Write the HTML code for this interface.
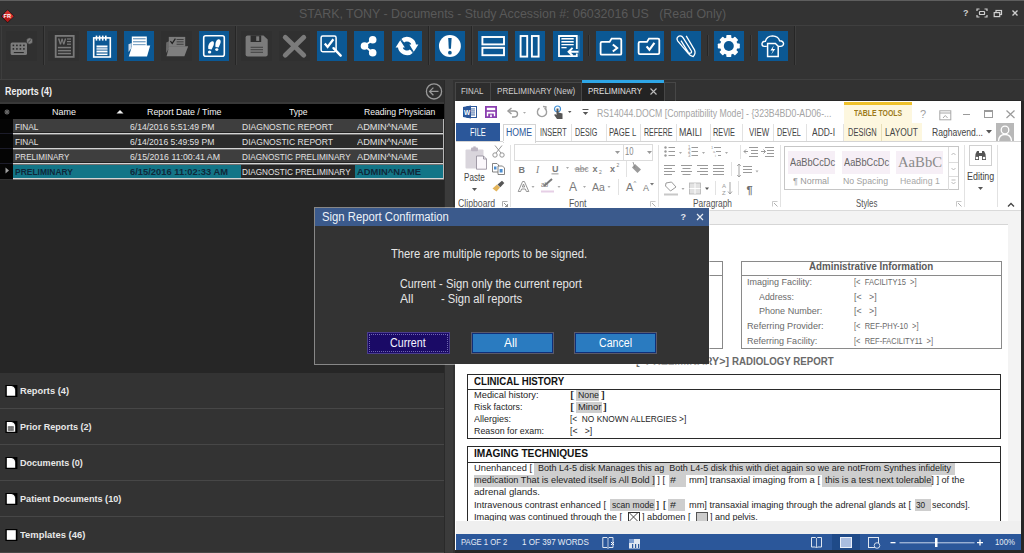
<!DOCTYPE html>
<html><head><meta charset="utf-8">
<style>
*{margin:0;padding:0;box-sizing:border-box}
html,body{width:1024px;height:553px;overflow:hidden;background:#333;font-family:"Liberation Sans",sans-serif;position:relative}
.a{position:absolute}
.t{position:absolute;white-space:nowrap;line-height:1}
.ib{position:absolute;top:31px;width:30px;height:30px;background:#0b5894}
.ig{position:absolute;top:31px;width:31px;height:30px;background:#303030}
.ib svg,.ig svg{position:absolute;left:0;top:0;width:30px;height:30px}
.sep{position:absolute;width:2px;border-left:1px solid #262626;border-right:1px solid #3e3e3e}
.hd{font-size:9px;color:#f2f2f2}
.rw{font-size:9px;color:#e2e2e2}
.sb{font-size:9.5px;font-weight:bold;color:#e8e8e8}
.rb{font-size:10px;color:#444}
.ad{font-size:9px;color:#6a6a6a}
.dc{font-size:9.5px;color:#1e1e1e}
.hl{position:absolute;background:#cecece}
svg{overflow:visible}
</style></head><body>
<!-- title bar -->
<div class="a" style="left:0;top:0;width:1024px;height:1px;background:#5e5e5e"></div>
<div class="t" style="left: 299px; font-size: 13px; color: rgb(89, 89, 89); top: 7px; transform-origin: 0px 0px; transform: scaleX(0.9537);">STARK, TONY - Documents - Study Accession #: 06032016 US &nbsp;&nbsp;(Read Only)</div>
<div class="a" style="left:0;top:25px;width:1024px;height:1px;background:#3f3f3f"></div>
<!-- window buttons -->
<svg class="a" style="left:960px;top:6px" width="64" height="14" viewBox="0 0 64 14">
<text x="3" y="10" font-family="Liberation Sans" font-weight="bold" font-size="9" fill="#d0d0d0">?</text>
<g fill="none" stroke="#cfcfcf" stroke-width="1.2">
<path d="M17 5 V3 H19.5 M24.5 3 H27 V5 M27 9 V11 H24.5 M19.5 11 H17 V9"></path>
<rect x="19.5" y="5.5" width="5" height="3" rx="0.6"></rect>
<rect x="36" y="4.5" width="5.5" height="4"></rect><rect x="34.2" y="6.6" width="5.5" height="4" fill="#333"></rect>
<path d="M52.5 4.5 L57.5 9.5 M57.5 4.5 L52.5 9.5" stroke-width="1.4"></path>
</g></svg>
<!-- toolbar -->
<div class="a" style="left:0;top:79px;width:1024px;height:1px;background:#404040"></div>
<svg class="a" style="left:0px;top:9px" width="16" height="15" viewBox="0 0 16 15">
<path d="M7.6 0.4 L14.4 7.2 L7.6 14 L0.8 7.2z" fill="#151515"></path>
<path d="M7.6 1.2 L13.6 7.2 L7.6 13.2 L1.6 7.2z" fill="#b81818"></path>
<path d="M7.6 1.2 L13.6 7.2 L10.6 10.2 L4.6 4.2z" fill="#d23030"></path>
<text x="3.6" y="9.4" font-family="Liberation Sans" font-weight="bold" font-size="5.5" fill="#fff">FR</text>
</svg>
<!-- toolbar icons -->
<div class="a" style="left:1px;top:26px;width:1px;height:53px;background:#3d3d3d"></div>
<div class="sep" style="left:43px;top:26px;height:39px"></div>
<div class="sep" style="left:235px;top:26px;height:39px"></div>
<div class="sep" style="left:428px;top:26px;height:39px"></div>
<div class="sep" style="left:471px;top:26px;height:39px"></div>
<div class="sep" style="left:588px;top:35px;height:21px"></div>
<div class="sep" style="left:707px;top:35px;height:21px"></div>
<div class="sep" style="left:750px;top:35px;height:21px"></div>
<div class="sep" style="left:794px;top:26px;height:39px"></div>
<!-- gray: keyboard -->
<div class="ig" style="left:6px"><svg viewBox="0 0 30 30">
<rect x="4.6" y="11.5" width="16.4" height="12.5" rx="1.5" fill="#7c7c7c"></rect>
<g fill="#2a2a2a"><rect x="6.6" y="13.6" width="1.6" height="1.6"></rect><rect x="10.1" y="13.6" width="1.6" height="1.6"></rect><rect x="13.6" y="13.6" width="1.6" height="1.6"></rect><rect x="17.1" y="13.6" width="1.6" height="1.6"></rect>
<rect x="6.6" y="17.1" width="1.6" height="1.6"></rect><rect x="10.1" y="17.1" width="1.6" height="1.6"></rect><rect x="13.6" y="17.1" width="1.6" height="1.6"></rect><rect x="17.1" y="17.1" width="1.6" height="1.6"></rect>
<rect x="7.8" y="21" width="10" height="1.1"></rect></g>
<circle cx="23.6" cy="10" r="3.2" fill="#7c7c7c" stroke="#2a2a2a" stroke-width="0.6"></circle>
<line x1="22.2" y1="11.3" x2="25" y2="8.6" stroke="#3a3a3a" stroke-width="0.9"></line>
</svg></div>
<!-- gray: word doc -->
<div class="ig" style="left:48px"><svg viewBox="0 0 30 30">
<rect x="7.7" y="4.9" width="18" height="21" fill="none" stroke="#7a7a7a" stroke-width="1.8"></rect>
<path d="M9.9 7.4 H11.5 L12.5 11.4 L13.5 7.4 H14.7 L15.7 11.4 L16.7 7.4 H18.2 L16.4 13.6 H15.1 L14.1 9.8 L13.1 13.6 H11.8z" fill="#7a7a7a"></path>
<g fill="#7a7a7a"><rect x="19" y="7.4" width="4" height="1.2"></rect><rect x="19" y="10" width="4" height="1.2"></rect><rect x="19" y="12.6" width="4" height="1.2"></rect>
<rect x="9.9" y="15.8" width="13.1" height="1.5"></rect><rect x="9.9" y="18.9" width="13.1" height="1.5"></rect><rect x="9.9" y="21.8" width="13.1" height="1.5"></rect></g>
</svg></div>
<!-- blue: notepad -->
<div class="ib" style="left:87px"><svg viewBox="0 0 30 30">
<rect x="6.7" y="6.9" width="16.6" height="19.1" fill="none" stroke="#fff" stroke-width="1.6"></rect>
<g fill="#fff"><rect x="8.7" y="4.6" width="1.6" height="5"></rect><rect x="11.8" y="4.6" width="1.6" height="5"></rect><rect x="14.9" y="4.6" width="1.6" height="5"></rect><rect x="18" y="4.6" width="1.6" height="5"></rect>
<rect x="9.5" y="14.5" width="11" height="1.5"></rect><rect x="9.5" y="17.2" width="11" height="1.5"></rect><rect x="9.5" y="19.9" width="11" height="1.5"></rect><rect x="9.5" y="22.6" width="11" height="1.5"></rect></g>
<g fill="#7fa6c6"><rect x="9.5" y="16" width="11" height="1.2"></rect><rect x="9.5" y="18.7" width="11" height="1.2"></rect><rect x="9.5" y="21.4" width="11" height="1.2"></rect></g>
</svg></div>
<!-- blue: folder open -->
<div class="ib" style="left:124px"><svg viewBox="0 0 30 30">
<path d="M7.6 12 L4.5 13.2 L4.5 21 L7.6 17z" fill="#cfdceb"></path>
<rect x="7.8" y="5.5" width="15" height="10" fill="#fff"></rect>
<g fill="#7fa6c6"><rect x="9" y="7" width="12.6" height="1.4"></rect><rect x="9" y="10" width="12.6" height="1.4"></rect><rect x="9" y="13" width="12.6" height="1.4"></rect></g>
<path d="M8.2 14.6 L26.2 14.6 L23 25.5 L4.8 25.5 Z" fill="#fff"></path>
</svg></div>
<!-- gray: folder check -->
<div class="ig" style="left:161px"><svg viewBox="0 0 30 30">
<path d="M8.5 10 L5.2 11.6 L5 22 L8.5 17z" fill="#6a6a6a"></path>
<rect x="7.8" y="5.9" width="16.4" height="9.6" fill="#7c7c7c"></rect>
<path d="M9.4 10.2 L11.2 12.4 L14.4 7.6" fill="none" stroke="#222" stroke-width="1.2"></path>
<g fill="#3a3a3a"><rect x="15.6" y="8" width="7" height="0.9"></rect><rect x="15.6" y="10.4" width="7" height="0.9"></rect><rect x="15.6" y="12.8" width="7" height="0.9"></rect></g>
<path d="M8.2 15.3 L27.2 15.3 L23.4 25.3 L5.6 25.3 Z" fill="#7f7f7f"></path>
</svg></div>
<!-- blue: footprints -->
<div class="ib" style="left:199px"><svg viewBox="0 0 30 30">
<rect x="4.7" y="4.8" width="20.6" height="20.4" rx="2" fill="none" stroke="#fff" stroke-width="1.6"></rect>
<path d="M12.5 10.5 C14.8 9.6 15.5 12 14.5 14.5 L12.6 18.6 L9.3 18 C8.7 15.3 9.7 11.8 12.5 10.5z" fill="#fff"></path>
<ellipse cx="10.6" cy="21.1" rx="1.7" ry="1.5" fill="#fff"></ellipse>
<path d="M19.3 8.2 C21.6 7.7 22.2 10.2 21.3 12.6 L19.6 16.4 L16.5 16 C16 13.4 16.6 9.2 19.3 8.2z" fill="#fff"></path>
<ellipse cx="17.8" cy="18.6" rx="1.6" ry="1.4" fill="#fff"></ellipse>
</svg></div>
<!-- gray: save -->
<div class="ig" style="left:241px"><svg viewBox="0 0 30 30">
<path d="M6.6 4.4 H22.5 L26.7 8.6 V23.6 Q26.7 25.6 24.7 25.6 H6.6 Q4.6 25.6 4.6 23.6 V6.4 Q4.6 4.4 6.6 4.4z" fill="#7b7b7b"></path>
<rect x="9.6" y="4.4" width="10.6" height="6.6" fill="#2d2d2d"></rect>
<rect x="15.2" y="5.3" width="3" height="4.6" fill="#7b7b7b"></rect>
<g fill="#3a3a3a"><rect x="9.6" y="15.8" width="12.4" height="0.9"></rect><rect x="9.6" y="18.3" width="12.4" height="0.9"></rect><rect x="9.6" y="20.8" width="12.4" height="0.9"></rect></g>
</svg></div>
<!-- gray: X -->
<div class="ig" style="left:279px"><svg viewBox="0 0 30 30">
<path d="M6.2 6.3 L24.8 24.2 M24.8 6.3 L6.2 24.2" stroke="#7b7b7b" stroke-width="4.8" stroke-linecap="round"></path>
</svg></div>
<!-- blue: magnify check -->
<div class="ib" style="left:317px"><svg viewBox="0 0 30 30">
<rect x="4.1" y="5.1" width="15" height="15.6" rx="1.6" fill="none" stroke="#fff" stroke-width="1.5"></rect>
<path d="M7.8 12.6 L10.6 16 L16.4 8.2" fill="none" stroke="#fff" stroke-width="2.3"></path>
<path d="M16.5 17.2 L23.7 24.7" stroke="#fff" stroke-width="2.4" stroke-linecap="round"></path>
</svg></div>
<!-- blue: share -->
<div class="ib" style="left:354px"><svg viewBox="0 0 30 30">
<path d="M10.5 15 L18.7 8.7 M10.5 15 L18.7 21.7" stroke="#fff" stroke-width="1.8"></path>
<circle cx="10.5" cy="15" r="3.8" fill="#fff"></circle><circle cx="18.7" cy="8.7" r="3.8" fill="#fff"></circle><circle cx="18.7" cy="21.7" r="3.8" fill="#fff"></circle>
</svg></div>
<!-- blue: refresh -->
<div class="ib" style="left:392px"><svg viewBox="0 0 30 30">
<path d="M10.2 10.2 A6.8 6.8 0 0 1 21.8 15" fill="none" stroke="#fff" stroke-width="4.6"></path>
<path d="M19.8 19.8 A6.8 6.8 0 0 1 8.2 15" fill="none" stroke="#fff" stroke-width="4.6"></path>
<path d="M17.4 13.6 L26.4 13.6 L21.8 20.8z" fill="#fff"></path>
<path d="M3.6 16.4 L12.8 16.4 L8.2 9.2z" fill="#fff"></path>
<path d="M8.6 7.6 L12.2 12.4 M18 17.8 L21.6 22.4" stroke="#0b5894" stroke-width="1"></path>
</svg></div>
<!-- blue: ! -->
<div class="ib" style="left:435px"><svg viewBox="0 0 30 30">
<circle cx="14.9" cy="15" r="10.95" fill="#fff"></circle>
<path d="M13.2 7 H16.6 L16 17.8 H13.8z" fill="#0b5894"></path>
<circle cx="14.9" cy="21.7" r="1.85" fill="#0b5894"></circle>
</svg></div>
<!-- blue: h split -->
<div class="ib" style="left:477.5px"><svg viewBox="0 0 30 30">
<rect x="4.4" y="6" width="21.6" height="7.4" fill="none" stroke="#fff" stroke-width="1.9"></rect>
<rect x="4.4" y="16.8" width="21.6" height="7.4" fill="none" stroke="#fff" stroke-width="1.9"></rect>
</svg></div>
<!-- blue: v split -->
<div class="ib" style="left:515px"><svg viewBox="0 0 30 30">
<rect x="5.6" y="5" width="6.6" height="20.6" fill="none" stroke="#fff" stroke-width="1.9"></rect>
<rect x="16.9" y="5" width="6.7" height="20.6" fill="none" stroke="#fff" stroke-width="1.9"></rect>
</svg></div>
<!-- blue: doc arrow -->
<div class="ib" style="left:552.5px"><svg viewBox="0 0 30 30">
<path d="M23.8 22.5 V25.2 H6 V5 H23.8 V18" fill="none" stroke="#fff" stroke-width="1.8"></path>
<line x1="26" y1="4.5" x2="26" y2="25.5" stroke="#7fa6c6" stroke-width="0.5"></line>
<g fill="#fff"><rect x="8.4" y="7" width="12.3" height="1.3"></rect><rect x="8.4" y="10" width="12.3" height="1.3"></rect><rect x="8.4" y="13" width="12.3" height="1.3"></rect><rect x="8.4" y="16" width="5.2" height="1.3"></rect></g>
<g fill="#a9c3da"><rect x="8.4" y="8.3" width="12.3" height="0.7"></rect><rect x="8.4" y="11.3" width="12.3" height="0.7"></rect></g>
<path d="M25.5 20.8 H15.6 M19.6 16.9 L15.6 20.8 L19.6 24.7" fill="none" stroke="#fff" stroke-width="2"></path>
</svg></div>
<!-- blue: folder arrow -->
<div class="ib" style="left:596px"><svg viewBox="0 0 30 30">
<path d="M4.6 12.2 Q4.6 10.9 5.9 10.9 H13.6 L15.6 7.6 H24 Q25.3 7.6 25.3 8.9 V22.4 Q25.3 23.7 24 23.7 H5.9 Q4.6 23.7 4.6 22.4z" fill="none" stroke="#fff" stroke-width="1.8"></path>
<path d="M16.8 13.4 L21.2 17 L16.8 20.6" fill="none" stroke="#fff" stroke-width="2"></path>
</svg></div>
<!-- blue: folder check -->
<div class="ib" style="left:633.5px"><svg viewBox="0 0 30 30">
<path d="M4.6 12.2 Q4.6 10.9 5.9 10.9 H13 L15 7.6 H24 Q25.3 7.6 25.3 8.9 V21.8 Q25.3 23.1 24 23.1 H5.9 Q4.6 23.1 4.6 21.8z" fill="none" stroke="#fff" stroke-width="1.8"></path>
<path d="M12.6 15.4 L15.4 18.8 L20.4 11.8" fill="none" stroke="#fff" stroke-width="2.2"></path>
</svg></div>
<!-- blue: paperclip -->
<div class="ib" style="left:671px"><svg viewBox="0 0 30 30">
<path d="M15.2 4.8 L23.6 19.2 Q25 22.4 22.2 25.6 Q18.6 24.6 17 22.2 L6.6 9.8 Q5 6.8 7.8 5.2 Q10.6 4.2 12.2 6.8 L20.4 20 Q21 21.8 19.4 22.2 Q18.1 22.5 17.3 21.3 L10 9.6" fill="none" stroke="#fff" stroke-width="1.3" stroke-linejoin="round"></path>
</svg></div>
<!-- blue: gear -->
<div class="ib" style="left:714.4px"><svg viewBox="0 0 30 30">
<g transform="translate(14.8 15)" fill="#fff">
<circle r="8.8"></circle>
<rect x="-2.5" y="-11" width="5" height="22" rx="0.8"></rect>
<rect x="-2.5" y="-11" width="5" height="22" rx="0.8" transform="rotate(45)"></rect>
<rect x="-2.5" y="-11" width="5" height="22" rx="0.8" transform="rotate(90)"></rect>
<rect x="-2.5" y="-11" width="5" height="22" rx="0.8" transform="rotate(135)"></rect>
<circle r="5" fill="#0b5894"></circle>
</g>
</svg></div>
<!-- blue: cloud -->
<div class="ib" style="left:758px"><svg viewBox="0 0 30 30">
<path d="M8.8 15.4 H6.2 Q3.8 15.2 4 12.6 Q4.4 10 7.4 10.2 Q8.8 5 14.6 4.9 Q20.4 5.2 21.6 9.8 Q25.4 10 25.6 12.8 Q25.4 15.2 22.5 15.4 H20.2" fill="none" stroke="#fff" stroke-width="1.4"></path>
<path d="M9.6 12.5 H17.4 L20.2 15.2 V25.6 H9.6z" fill="none" stroke="#fff" stroke-width="1.5"></path>
<path d="M15.8 14.4 L12.4 19.4 H15 L13.2 23.4 L17.2 18 H14.7z" fill="#fff"></path>
</svg></div>
<!-- left panel -->
<div class="a" style="left:0;top:80px;width:445px;height:22px;background:#2e2e2e"></div>
<div class="a" style="left:0;top:102px;width:445px;height:2px;background:#383838"></div>
<div class="t sb" style="left: 5px; font-size: 10px; color: rgb(240, 240, 240); top: 86.53px; transform-origin: 0px 0px; transform: scaleX(0.8902);">Reports (4)</div>
<svg class="a" style="left:425px;top:83px" width="18" height="18" viewBox="0 0 18 18">
<circle cx="9" cy="8.4" r="7.6" fill="none" stroke="#9a9a9a" stroke-width="1.3"></circle>
<path d="M13.5 8.4 H4.6 M8.4 4.6 L4.6 8.4 L8.4 12.2" fill="none" stroke="#9a9a9a" stroke-width="1.3"></path>
</svg>
<div class="a" style="left:0;top:104px;width:445px;height:15px;background:#000"></div>
<svg class="a" style="left:3.5px;top:108.5px" width="6" height="6" viewBox="0 0 6 6"><g stroke="#6a6a6a" stroke-width="1.1"><path d="M3 0.3 V5.7 M0.3 3 H5.7 M1.1 1.1 L4.9 4.9 M4.9 1.1 L1.1 4.9"></path></g></svg>
<div class="t hd" style="left: 52px; top: 107.98px; transform-origin: 0px 0px; transform: scaleX(0.9993);">Name</div>
<svg class="a" style="left:116px;top:109px" width="8" height="5" viewBox="0 0 8 5"><path d="M0.5 4.5 L4 1 L7.5 4.5z" fill="#f0f0f0"></path></svg>
<div class="t hd" style="left: 146.8px; top: 107.98px; transform-origin: 0px 0px; transform: scaleX(0.9863);">Report Date / Time</div>
<div class="t hd" style="left: 289px; top: 107.98px; transform-origin: 0px 0px; transform: scaleX(0.9531);">Type</div>
<div class="t hd" style="left: 364.2px; top: 107.98px; transform-origin: 0px 0px; transform: scaleX(0.9578);">Reading Physician</div>
<!-- rows -->
<div class="a" style="left:0;top:119px;width:13px;height:60px;background:#050505"></div>
<div class="a" style="left:0;top:133px;width:13px;height:1px;background:#1c1c2a"></div>
<div class="a" style="left:0;top:148px;width:13px;height:1px;background:#1c1c2a"></div>
<div class="a" style="left:0;top:163px;width:13px;height:1px;background:#1c1c2a"></div>
<svg class="a" style="left:5px;top:167px" width="5" height="7" viewBox="0 0 5 7"><path d="M0.5 0.5 L4 3.5 L0.5 6.5z" fill="#a0a0a0"></path></svg>
<div class="a" style="left:13px;top:119px;width:432px;height:13px;background:#3e3e3e"></div>
<div class="a" style="left:13px;top:132px;width:432px;height:1px;background:#222"></div>
<div class="a" style="left:13px;top:133px;width:432px;height:1px;background:#d4d4d4"></div><div class="a" style="left:13px;top:134px;width:432px;height:1px;background:#707070"></div>
<div class="a" style="left:13px;top:135px;width:432px;height:13px;background:#2b2b2b"></div>
<div class="a" style="left:13px;top:148px;width:432px;height:1px;background:#d4d4d4"></div><div class="a" style="left:13px;top:149px;width:432px;height:1px;background:#707070"></div>
<div class="a" style="left:13px;top:150px;width:432px;height:12px;background:#3e3e3e"></div>
<div class="a" style="left:13px;top:162px;width:432px;height:1px;background:#222"></div>
<div class="a" style="left:13px;top:163px;width:432px;height:1px;background:#d4d4d4"></div><div class="a" style="left:13px;top:164px;width:432px;height:1px;background:#707070"></div>
<div class="a" style="left:13px;top:165px;width:432px;height:13px;background:#137587"></div>
<div class="a" style="left:241px;top:165px;width:114px;height:13px;background:#262626"></div>
<div class="a" style="left:13px;top:178px;width:432px;height:1px;background:#d4d4d4"></div><div class="a" style="left:13px;top:179px;width:432px;height:1px;background:#707070"></div>
<div class="a" style="left:443px;top:119px;width:2px;height:60px;background:#b8b8b8"></div>

<div class="t rw" style="left: 15.4px; top: 122.58px; transform-origin: 0px 0px; transform: scaleX(0.9171);">FINAL</div>
<div class="t rw" style="left: 129.7px; top: 122.58px; transform-origin: 0px 0px; transform: scaleX(0.9528);">6/14/2016 5:51:49 PM</div>
<div class="t rw" style="left: 242.4px; top: 122.58px; transform-origin: 0px 0px; transform: scaleX(0.9493);">DIAGNOSTIC REPORT</div>
<div class="t rw" style="left: 357px; top: 122.58px; transform-origin: 0px 0px; transform: scaleX(1.0231);">ADMIN^NAME</div>

<div class="t rw" style="left: 15.4px; top: 137.58px; transform-origin: 0px 0px; transform: scaleX(0.9171);">FINAL</div>
<div class="t rw" style="left: 129.7px; top: 137.58px; transform-origin: 0px 0px; transform: scaleX(0.9528);">6/14/2016 5:49:59 PM</div>
<div class="t rw" style="left: 242.4px; top: 137.58px; transform-origin: 0px 0px; transform: scaleX(0.9493);">DIAGNOSTIC REPORT</div>
<div class="t rw" style="left: 357px; top: 137.58px; transform-origin: 0px 0px; transform: scaleX(1.0231);">ADMIN^NAME</div>

<div class="t rw" style="left: 15.4px; top: 152.58px; transform-origin: 0px 0px; transform: scaleX(0.8939);">PRELIMINARY</div>
<div class="t rw" style="left: 129.7px; top: 152.58px; transform-origin: 0px 0px; transform: scaleX(0.9738);">6/15/2016 11:00:41 AM</div>
<div class="t rw" style="left: 242.4px; top: 152.58px; transform-origin: 0px 0px; transform: scaleX(0.9099);">DIAGNOSTIC PRELIMINARY</div>
<div class="t rw" style="left: 357px; top: 152.58px; transform-origin: 0px 0px; transform: scaleX(1.0231);">ADMIN^NAME</div>

<div class="t rw" style="left: 15.2px; font-weight: bold; color: rgb(16, 40, 58); top: 167.58px; transform-origin: 0px 0px; transform: scaleX(0.9405);">PRELIMINARY</div>
<div class="t rw" style="left: 129.7px; font-weight: bold; color: rgb(16, 40, 58); top: 167.58px; transform-origin: 0px 0px; transform: scaleX(1.04);">6/15/2016 11:02:33 AM</div>
<div class="t rw" style="left: 242.4px; top: 167.58px; transform-origin: 0px 0px; transform: scaleX(0.9099);">DIAGNOSTIC PRELIMINARY</div>
<div class="t rw" style="left: 357px; font-weight: bold; color: rgb(16, 40, 58); top: 167.58px; transform-origin: 0px 0px; transform: scaleX(1.0446);">ADMIN^NAME</div>

<div class="a" style="left:0;top:180px;width:445px;height:193px;background:#262626"></div>

<!-- sidebar -->
<div class="a" style="left:0;top:373px;width:445px;height:180px;background:#333"></div>
<div class="a" style="left:0;top:408px;width:445px;height:1px;background:#474747"></div>
<div class="a" style="left:0;top:444px;width:445px;height:1px;background:#474747"></div>
<div class="a" style="left:0;top:480px;width:445px;height:1px;background:#474747"></div>
<div class="a" style="left:0;top:516px;width:445px;height:1px;background:#474747"></div>
<div class="a" style="left:0;top:552px;width:445px;height:1px;background:#474747"></div>
<svg class="a" style="left:5px;top:384.9px" width="13" height="12" viewBox="0 0 13 12"><rect x="0.4" y="0" width="12" height="12" fill="#000"></rect><path d="M1.8 1 H6.6 L10.2 4.6 V10.8 H1.8z" fill="#fff"></path><path d="M7.4 0.8 L10.4 3.8 H7.4z" fill="#fff"></path></svg>
<div class="t sb" style="left: 20.2px; top: 386.26px; transform-origin: 0px 0px; transform: scaleX(0.9769);">Reports (4)</div>
<svg class="a" style="left:5px;top:420.9px" width="13" height="12" viewBox="0 0 13 12"><rect x="0.4" y="0" width="12" height="12" fill="#000"></rect><path d="M1.8 1 H6.6 L10.2 4.6 V10.8 H1.8z" fill="#fff"></path><path d="M7.4 0.8 L10.4 3.8 H7.4z" fill="#fff"></path><rect x="2.8" y="5" width="6" height="5" fill="#8a8a8a"></rect><path d="M2.8 6.6 H8.8 M2.8 8.3 H8.8 M4.8 5 V10 M6.8 5 V10" stroke="#666" stroke-width="0.5"></path></svg>
<div class="t sb" style="left: 20.2px; top: 422.26px; transform-origin: 0px 0px; transform: scaleX(0.9551);">Prior Reports (2)</div>
<svg class="a" style="left:5px;top:456.9px" width="13" height="12" viewBox="0 0 13 12"><rect x="0.4" y="0" width="12" height="12" fill="#000"></rect><path d="M1.8 1 H6.6 L10.2 4.6 V10.8 H1.8z" fill="#fff"></path><path d="M7.4 0.8 L10.4 3.8 H7.4z" fill="#fff"></path></svg>
<div class="t sb" style="left: 20.2px; top: 458.26px; transform-origin: 0px 0px; transform: scaleX(0.9517);">Documents (0)</div>
<svg class="a" style="left:5px;top:492.9px" width="13" height="12" viewBox="0 0 13 12"><rect x="0.4" y="0" width="12" height="12" fill="#000"></rect><path d="M1.8 1 H6.6 L10.2 4.6 V10.8 H1.8z" fill="#fff"></path><path d="M7.4 0.8 L10.4 3.8 H7.4z" fill="#fff"></path></svg>
<div class="t sb" style="left: 20.2px; top: 494.26px; transform-origin: 0px 0px; transform: scaleX(0.9595);">Patient Documents (10)</div>
<svg class="a" style="left:5px;top:528.9px" width="13" height="12" viewBox="0 0 13 12"><rect x="0.4" y="0" width="12" height="12" fill="#000"></rect><rect x="1.8" y="1.2" width="9" height="9.6" fill="#fff"></rect></svg>
<div class="t sb" style="left: 20.2px; top: 530.26px; transform-origin: 0px 0px; transform: scaleX(0.992);">Templates (46)</div>
<!-- right panel -->
<div class="a" style="left:445px;top:80px;width:579px;height:473px;background:#323232"></div>
<div class="a" style="left:455px;top:100px;width:566px;height:1px;background:#282828"></div>
<div class="a" style="left:445px;top:80px;width:7.5px;height:473px;background:#3b3b3b"></div>
<div class="a" style="left:444px;top:80px;width:1px;height:473px;background:#2a2a2a"></div>
<!-- tabs -->
<div class="a" style="left:455px;top:82px;width:36px;height:19px;background:#2d2d2d;border:1px solid #474747;border-bottom:none"></div>
<div class="t" style="left: 461px; font-size: 9px; color: rgb(208, 208, 208); top: 86.88px; transform-origin: 0px 0px; transform: scaleX(0.8779);">FINAL</div>
<div class="a" style="left:490px;top:82px;width:92px;height:19px;background:#2d2d2d;border:1px solid #474747;border-bottom:none"></div>
<div class="t" style="left: 497px; font-size: 9px; color: rgb(208, 208, 208); top: 86.88px; transform-origin: 0px 0px; transform: scaleX(0.8969);">PRELIMINARY (New)</div>
<div class="a" style="left:582px;top:80px;width:82px;height:21px;background:#232323"></div>
<div class="a" style="left:582px;top:80px;width:82px;height:3px;background:#2ea6e6"></div>
<div class="t" style="left: 587.8px; font-size: 9px; color: rgb(224, 224, 224); top: 86.88px; transform-origin: 0px 0px; transform: scaleX(0.8873);">PRELIMINARY</div>
<svg class="a" style="left:650px;top:88px" width="7" height="7" viewBox="0 0 7 7"><path d="M0.5 0.5 L6.5 6.5 M6.5 0.5 L0.5 6.5" stroke="#bdbdbd" stroke-width="1.1"></path></svg>
<div class="a" style="left:664px;top:82px;width:12px;height:19px;border:1px solid #474747;border-bottom:none"></div>
<!-- word frame -->
<div class="a" style="left:455px;top:101px;width:566px;height:449px;background:#fff"></div>
<div class="a" style="left:1021px;top:101px;width:3px;height:452px;background:#262626"></div>
<div class="a" style="left:455px;top:550px;width:569px;height:3px;background:#262626"></div>
<!-- QAT -->
<svg class="a" style="left:462px;top:105px" width="16" height="14" viewBox="0 0 16 14">
<rect x="5" y="1.5" width="9.5" height="11" fill="#fff" stroke="#2b579a" stroke-width="1"></rect>
<g fill="#2b579a"><rect x="9" y="3.5" width="4" height="0.9"></rect><rect x="9" y="5.5" width="4" height="0.9"></rect><rect x="9" y="7.5" width="4" height="0.9"></rect><rect x="9" y="9.5" width="4" height="0.9"></rect></g>
<path d="M1 2 L9 0.5 V13.5 L1 12z" fill="#2b579a"></path>
<text x="2" y="9.6" font-family="Liberation Sans" font-weight="bold" font-size="6.5" fill="#fff">W</text>
</svg>
<svg class="a" style="left:485px;top:106px" width="12" height="12" viewBox="0 0 12 12">
<path d="M0.9 0.9 H11.1 V11.1 H0.9z" fill="none" stroke="#8a3fb0" stroke-width="1.8"></path>
<rect x="1" y="4.2" width="10" height="1.6" fill="#8a3fb0"></rect>
<rect x="3.2" y="7.6" width="5.6" height="3.5" fill="#8a3fb0"></rect><rect x="5.2" y="8.6" width="1.6" height="2.5" fill="#fff"></rect>
</svg>
<svg class="a" style="left:506px;top:107px" width="22" height="11" viewBox="0 0 22 11">
<path d="M3 4 H8 Q11.5 4 11.5 7 Q11.5 10 8 10 H6" fill="none" stroke="#9a9a9a" stroke-width="1.4"></path>
<path d="M5.5 1 L2 4 L5.5 7" fill="none" stroke="#9a9a9a" stroke-width="1.4"></path>
<path d="M17 5 L20 5 L18.5 6.8z" fill="#aaa"></path>
</svg>
<svg class="a" style="left:536px;top:106px" width="12" height="12" viewBox="0 0 12 12">
<path d="M8.5 2.2 A4.6 4.6 0 1 1 3.5 2.2" fill="none" stroke="#a0a0a0" stroke-width="1.4"></path>
<path d="M7 0.5 L10 0.8 L9.6 4" fill="none" stroke="#a0a0a0" stroke-width="1.3"></path>
</svg>
<svg class="a" style="left:552px;top:105px" width="22" height="15" viewBox="0 0 22 15">
<circle cx="5.5" cy="4" r="3" fill="none" stroke="#3f8fd6" stroke-width="1.2"></circle>
<path d="M4.5 3.5 V10 L3 9 L2.2 10 L5 14 H10.5 V8.5 L6.5 7.5 V3.5z" fill="#555"></path>
<path d="M16 6 L19.5 6 L17.75 8z" fill="#555"></path>
</svg>
<svg class="a" style="left:582px;top:108px" width="7" height="8" viewBox="0 0 7 8"><rect x="0.5" y="1" width="6" height="1" fill="#555"></rect><path d="M0.8 4 H6.2 L3.5 7z" fill="#555"></path></svg>
<div class="t" style="left: 596.7px; font-size: 10.5px; color: rgb(164, 164, 164); top: 107.51px; transform-origin: 0px 0px; transform: scaleX(0.8295);">RS14044.DOCM [Compatibility Mode] - {323B4BD0-AD06-...</div>
<!-- table tools -->
<div class="a" style="left:844px;top:102px;width:78px;height:39px;background:#fdf7df"></div>
<div class="a" style="left:844px;top:102px;width:68px;height:3px;background:#efc12a"></div>
<div class="a" style="left:912px;top:102px;width:10px;height:21px;background:#fff"></div>
<div class="t" style="left: 853.5px; font-size: 9.5px; font-weight: bold; color: rgb(156, 122, 26); top: 107.76px; transform-origin: 0px 0px; transform: scaleX(0.7286);">TABLE TOOLS</div>
<!-- window controls -->
<div class="t" style="left: 920px; font-size: 11px; color: rgb(160, 160, 160); top: 108.69px;">?</div>
<svg class="a" style="left:939px;top:110px" width="13" height="11" viewBox="0 0 13 11"><rect x="0.8" y="0.8" width="11" height="9" fill="none" stroke="#a8a8a8" stroke-width="1"></rect><path d="M0.8 3 H11.8" stroke="#a8a8a8"></path><path d="M4 8 L6.3 5.5 L8.6 8" fill="none" stroke="#a8a8a8"></path></svg>
<div class="a" style="left:962.6px;top:113.5px;width:7.4px;height:1.3px;background:#9a9a9a"></div>
<div class="a" style="left:984px;top:110px;width:9px;height:8px;border:1px solid #9a9a9a;border-top-width:2px"></div>
<svg class="a" style="left:1005.5px;top:110px" width="9" height="8.5" viewBox="0 0 9 8.5"><path d="M0.5 0.5 L8.5 8 M8.5 0.5 L0.5 8" stroke="#9a9a9a" stroke-width="1.2"></path></svg>
<!-- tabs -->
<div class="a" style="left:456px;top:123px;width:44px;height:18px;background:#2b579a"></div>
<div class="t" style="left: 470px; font-size: 10px; color: rgb(255, 255, 255); top: 127.73px; transform-origin: 0px 0px; transform: scaleX(0.7479);">FILE</div>
<div class="a" style="left:503px;top:123.5px;width:33px;height:19px;background:#fff;border:1px solid #d4d4d4;border-bottom:none"></div>
<div class="t rb" style="left: 506.3px; color: rgb(43, 87, 154); top: 127.73px; transform-origin: 0px 0px; transform: scaleX(0.8667);">HOME</div>
<div class="t rb" style="left: 539.8px; top: 127.73px; transform-origin: 0px 0px; transform: scaleX(0.7288);">INSERT</div>
<div class="t rb" style="left: 574.8px; top: 127.73px; transform-origin: 0px 0px; transform: scaleX(0.7133);">DESIG</div>
<div class="t rb" style="left: 609px; top: 127.73px; transform-origin: 0px 0px; transform: scaleX(0.7714);">PAGE L</div>
<div class="t rb" style="left: 643.8px; top: 127.73px; transform-origin: 0px 0px; transform: scaleX(0.7026);">REFERE</div>
<div class="t rb" style="left: 679.4px; top: 127.73px; transform-origin: 0px 0px; transform: scaleX(0.8804);">MAILI</div>
<div class="t rb" style="left: 713.4px; top: 127.73px; transform-origin: 0px 0px; transform: scaleX(0.733);">REVIE</div>
<div class="t rb" style="left: 748.7px; top: 127.73px; transform-origin: 0px 0px; transform: scaleX(0.7863);">VIEW</div>
<div class="t rb" style="left: 776.5px; top: 127.73px; transform-origin: 0px 0px; transform: scaleX(0.7257);">DEVEL</div>
<div class="t rb" style="left: 811.8px; top: 127.73px; transform-origin: 0px 0px; transform: scaleX(0.8445);">ADD-I</div>
<div class="t rb" style="left: 847.7px; top: 127.73px; transform-origin: 0px 0px; transform: scaleX(0.7485);">DESIGN</div>
<div class="t rb" style="left: 885px; top: 127.73px; transform-origin: 0px 0px; transform: scaleX(0.8401);">LAYOUT</div>
<div class="a" style="left:571px;top:124px;width:1px;height:17px;background:#e2e2e2"></div>
<div class="a" style="left:605.5px;top:124px;width:1px;height:17px;background:#e2e2e2"></div>
<div class="a" style="left:640px;top:124px;width:1px;height:17px;background:#e2e2e2"></div>
<div class="a" style="left:675.5px;top:124px;width:1px;height:17px;background:#e2e2e2"></div>
<div class="a" style="left:709.5px;top:124px;width:1px;height:17px;background:#e2e2e2"></div>
<div class="a" style="left:742px;top:124px;width:1px;height:17px;background:#e2e2e2"></div>
<div class="a" style="left:773px;top:124px;width:1px;height:17px;background:#e2e2e2"></div>
<div class="a" style="left:806px;top:124px;width:1px;height:17px;background:#e2e2e2"></div>
<div class="a" style="left:881px;top:124px;width:1px;height:17px;background:#e8dfb8"></div>
<div class="a" style="left:842.5px;top:124px;width:1px;height:17px;background:#e2e2e2"></div>
<div class="t" style="left: 931.8px; font-size: 10.5px; color: rgb(68, 68, 68); top: 126.61px; transform-origin: 0px 0px; transform: scaleX(0.8164);">Raghavend...</div>
<svg class="a" style="left:986px;top:130px" width="6" height="4" viewBox="0 0 6 4"><path d="M0 0 H6 L3 3.5z" fill="#555"></path></svg>
<svg class="a" style="left:996px;top:123px" width="18" height="18" viewBox="0 0 18 18"><rect width="18" height="18" fill="#b8b8b8"></rect><circle cx="9" cy="7" r="3.8" fill="none" stroke="#fff" stroke-width="1.3"></circle><path d="M2.5 18 Q3 11.5 9 11.5 Q15 11.5 15.5 18" fill="none" stroke="#fff" stroke-width="1.3"></path></svg>
<!-- ribbon body -->
<div class="a" style="left:456px;top:141px;width:565px;height:1px;background:#d4d4d4"></div>
<div class="a" style="left:503px;top:141px;width:32px;height:1px;background:#fff"></div>
<div class="a" style="left:456px;top:210px;width:565px;height:1px;background:#dadada"></div>
<div class="a" style="left:456px;top:211px;width:565px;height:13px;background:#f3f3f3"></div>
<div class="a" style="left:456px;top:224px;width:552px;height:1px;background:#d6d6d6"></div>
<!-- clipboard group -->
<svg class="a" style="left:464px;top:146px" width="24" height="24" viewBox="0 0 24 24">
<rect x="1.5" y="3.5" width="18" height="19" rx="1" fill="#d9d5dc"></rect>
<rect x="7" y="1.6" width="7" height="3.6" rx="1" fill="#bdb6c2"></rect><rect x="9.3" y="0.4" width="2.4" height="2" fill="#bdb6c2"></rect>
<path d="M12.5 10 H19.5 L22.5 13 V23.2 H12.5z" fill="#fbf8fc" stroke="#8e8896" stroke-width="0.8"></path>
<path d="M19.5 10 V13 H22.5" fill="none" stroke="#8e8896" stroke-width="0.8"></path>
</svg>
<div class="t" style="left: 464.2px; font-size: 11px; color: rgb(68, 68, 68); top: 171.69px; transform-origin: 0px 0px; transform: scaleX(0.7356);">Paste</div>
<svg class="a" style="left:472px;top:188px" width="5" height="3" viewBox="0 0 5 3"><path d="M0 0 H5 L2.5 3z" fill="#555"></path></svg>
<svg class="a" style="left:492px;top:145px" width="13" height="13" viewBox="0 0 13 13">
<path d="M3 0.5 L9 8 M10 0.5 L4 8" stroke="#8a8a8a" stroke-width="0.9"></path>
<circle cx="3" cy="10" r="2.2" fill="none" stroke="#8a8a8a" stroke-width="0.9"></circle><circle cx="10" cy="10" r="2.2" fill="none" stroke="#8a8a8a" stroke-width="0.9"></circle>
</svg>
<svg class="a" style="left:492px;top:163px" width="13" height="12" viewBox="0 0 13 12">
<path d="M0.5 0.5 H5 L6.5 2 V9 H0.5z" fill="#fff" stroke="#666" stroke-width="0.8"></path>
<path d="M6 3 H10.5 L12.5 5 V11.5 H6z" fill="#fff" stroke="#666" stroke-width="0.8"></path>
<rect x="2" y="3.5" width="2.5" height="3" fill="#4c8ed0"></rect><rect x="7.6" y="6" width="3" height="3.5" fill="#4c8ed0"></rect>
</svg>
<svg class="a" style="left:492px;top:180px" width="13" height="12" viewBox="0 0 13 12">
<path d="M0.5 8.5 L5 4.5 L8 7.5 L4.5 11.5z" fill="#e3b45a"></path>
<path d="M5.5 4.5 L10 0.8 L12.3 3 L8.3 7.3z" fill="#555"></path>
</svg>
<div class="t" style="left: 458.3px; font-size: 11px; color: rgb(85, 85, 85); top: 198.09px; transform-origin: 0px 0px; transform: scaleX(0.7899);">Clipboard</div>
<svg class="a" style="left:502px;top:201px" width="6" height="6" viewBox="0 0 6 6"><path d="M0.5 5.5 V0.5 H5.5" fill="none" stroke="#999" stroke-width="0.8"></path><path d="M2 2 L5.5 5.5 M5.5 3 V5.5 H3" fill="none" stroke="#777" stroke-width="0.8"></path></svg>
<div class="a" style="left:510px;top:145px;width:1px;height:62px;background:#e2e2e2"></div>
<!-- font group -->
<div class="a" style="left:514.4px;top:144.2px;width:139px;height:16.5px;border:1px solid #dcdcdc"></div>
<div class="a" style="left:622.5px;top:145px;width:1px;height:15px;background:#dcdcdc"></div>
<svg class="a" style="left:615px;top:151px" width="5" height="3" viewBox="0 0 5 3"><path d="M0 0 H5 L2.5 3z" fill="#999"></path></svg>
<svg class="a" style="left:646.5px;top:151px" width="5" height="3" viewBox="0 0 5 3"><path d="M0 0 H5 L2.5 3z" fill="#999"></path></svg>
<div class="t" style="left: 625px; font-size: 10px; color: rgb(136, 136, 136); top: 147.03px; transform-origin: 0px 0px; transform: scaleX(0.764);">10</div>
<svg class="a" style="left:515px;top:161px" width="140" height="34" viewBox="0 0 140 34">
<g font-family="Liberation Sans" fill="#7a7a7a">
<text x="3.5" y="11.5" font-size="9" font-weight="bold">B</text>
<text x="21" y="11.5" font-size="9.5" font-style="italic" font-family="Liberation Serif">I</text>
<text x="37" y="11" font-size="9" font-weight="bold">U</text>
<text x="60" y="11" font-size="8.5" fill="#909090">abc</text>
<text x="77.5" y="11" font-size="9" font-weight="bold">x</text><text x="84" y="13" font-size="5">2</text>
<text x="95" y="11" font-size="9" font-weight="bold">x</text><text x="101.5" y="6" font-size="5">2</text>
</g><path d="M3.2 30.5 L7.6 20.5 H9.4 L13.8 30.5 H11.4 L10.4 28 H6.6 L5.6 30.5z M7.3 26 H9.7 L8.5 23z" fill="#fff" stroke="#8a8a8a" stroke-width="0.9" stroke-linejoin="round"></path><g font-family="Liberation Sans" fill="#7a7a7a">
<text x="26" y="26" font-size="6.5">ab</text>
<text x="54" y="30" font-size="12">A</text>
<text x="77" y="30" font-size="10.5">Aa</text>
<text x="111" y="30" font-size="11">A</text><text x="118.5" y="24" font-size="6">^</text>
<text x="128" y="30" font-size="9">A</text>
</g>
<rect x="36.5" y="12.5" width="7" height="0.8" fill="#7a7a7a"></rect>
<rect x="59.5" y="7.6" width="13" height="0.8" fill="#7a7a7a"></rect>
<path d="M51 6 L54 6 L52.5 8z" fill="#aaa"></path>
<path d="M29 25 L37 18" stroke="#7a7a7a" stroke-width="2"></path>
<rect x="26" y="29.5" width="13" height="2" fill="#e6cfe6"></rect>
<path d="M16.5 25 L19.5 25 L18 27z M42.5 25 L45.5 25 L44 27z M68 25 L71 25 L69.5 27z M92.5 25 L95.5 25 L94 27z" fill="#aaa"></path>
<path d="M135 22 L139 22 L137 24.5z" fill="#777"></path>
<path d="M120 3 L126 8.5 L122.5 12 L117 6.5z" fill="#9a9a9a"></path>
<path d="M118 1 L120 7" stroke="#888" stroke-width="0.8"></path>
</svg>
<div class="a" style="left:625.5px;top:161px;width:1px;height:16px;background:#e2e2e2"></div>
<div class="a" style="left:618px;top:179px;width:1px;height:16px;background:#e2e2e2"></div>
<div class="t" style="left: 569.3px; font-size: 11px; color: rgb(85, 85, 85); top: 198.09px; transform-origin: 0px 0px; transform: scaleX(0.7949);">Font</div>
<svg class="a" style="left:650px;top:201px" width="6" height="6" viewBox="0 0 6 6"><path d="M0.5 5.5 V0.5 H5.5" fill="none" stroke="#bbb" stroke-width="0.8"></path><path d="M2 2 L5.5 5.5" stroke="#999" stroke-width="0.8"></path></svg>
<div class="a" style="left:657.8px;top:145px;width:1px;height:62px;background:#e2e2e2"></div>
<!-- paragraph group -->
<svg class="a" style="left:662px;top:144px" width="118" height="54" viewBox="0 0 118 54">
<g fill="#9a9a9a">
<circle cx="3.5" cy="3.5" r="1.2"></circle><circle cx="3.5" cy="7.5" r="1.2"></circle><circle cx="3.5" cy="11.5" r="1.2"></circle>
<rect x="6.5" y="3" width="6.5" height="1"></rect><rect x="6.5" y="7" width="6.5" height="1"></rect><rect x="6.5" y="11" width="6.5" height="1"></rect>
<path d="M17 8 L20 8 L18.5 10z" fill="#aaa"></path>
<text x="26" y="5" font-size="4.5" font-family="Liberation Sans">1</text><text x="26" y="9" font-size="4.5" font-family="Liberation Sans">2</text><text x="26" y="13" font-size="4.5" font-family="Liberation Sans">3</text>
<rect x="29.5" y="3" width="6.5" height="1"></rect><rect x="29.5" y="7" width="6.5" height="1"></rect><rect x="29.5" y="11" width="6.5" height="1"></rect>
<path d="M40 8 L43 8 L41.5 10z" fill="#aaa"></path>
<text x="49" y="5" font-size="4" font-family="Liberation Sans">1</text><text x="51" y="9" font-size="4" font-family="Liberation Sans">a</text><text x="53" y="13" font-size="4" font-family="Liberation Sans">i</text>
<rect x="52" y="3" width="7" height="1"></rect><rect x="54" y="7" width="5" height="1"></rect><rect x="56" y="11" width="3" height="1"></rect>
<path d="M63 8 L66 8 L64.5 10z" fill="#aaa"></path>
<rect x="87" y="3" width="9" height="1"></rect><rect x="89" y="6" width="7" height="1"></rect><rect x="89" y="9" width="7" height="1"></rect><rect x="87" y="12" width="9" height="1"></rect>
<path d="M86 7.5 L82 7.5 M84 5.5 L82 7.5 L84 9.5" stroke="#9a9a9a" stroke-width="1" fill="none"></path>
<rect x="103" y="3" width="9" height="1"></rect><rect x="105" y="6" width="7" height="1"></rect><rect x="105" y="9" width="7" height="1"></rect><rect x="103" y="12" width="9" height="1"></rect>
<path d="M99 7.5 L103.5 7.5 M101.5 5.5 L103.5 7.5 L101.5 9.5" stroke="#9a9a9a" stroke-width="1" fill="none"></path>
<rect x="2" y="21" width="11" height="1"></rect><rect x="2" y="24" width="8" height="1"></rect><rect x="2" y="27" width="11" height="1"></rect><rect x="2" y="30" width="8" height="1"></rect>
<rect x="19" y="21" width="11" height="1"></rect><rect x="20.5" y="24" width="8" height="1"></rect><rect x="19" y="27" width="11" height="1"></rect><rect x="20.5" y="30" width="8" height="1"></rect>
<rect x="35" y="21" width="11" height="1"></rect><rect x="38" y="24" width="8" height="1"></rect><rect x="35" y="27" width="11" height="1"></rect><rect x="38" y="30" width="8" height="1"></rect>
<rect x="51" y="21" width="11" height="1"></rect><rect x="51" y="24" width="11" height="1"></rect><rect x="51" y="27" width="11" height="1"></rect><rect x="51" y="30" width="11" height="1"></rect>
<rect x="81" y="22" width="9" height="1"></rect><rect x="81" y="25" width="9" height="1"></rect><rect x="81" y="28" width="9" height="1"></rect>
<path d="M77 20 V33 M75.2 22 L77 20 L78.8 22 M75.2 31 L77 33 L78.8 31" stroke="#9a9a9a" stroke-width="0.9" fill="none"></path>
<path d="M93.5 26.5 L96.5 26.5 L95 28.5z" fill="#aaa"></path>
<path d="M4 39 L9.5 38 L14 43 L8.5 47 L3.5 42z" fill="none" stroke="#9a9a9a" stroke-width="1"></path>
<rect x="2" y="49.5" width="14" height="2" fill="#c8c8c8"></rect>
<path d="M19.5 44 L22.5 44 L21 46z" fill="#aaa"></path>
<rect x="27.5" y="39" width="11" height="11" fill="#e2e2e2" stroke="#b4b4b4" stroke-width="0.8"></rect>
<path d="M33 39 V50 M27.5 44.5 H38.5" stroke="#fff" stroke-width="1"></path>
<path d="M43 43.5 L47 43.5 L45 46z" fill="#555"></path>
<text x="60" y="44" font-size="6" font-family="Liberation Sans">A</text><text x="60" y="51" font-size="6" font-family="Liberation Sans">Z</text>
<path d="M68 38 V50 M66 47.5 L68 50 L70 47.5" stroke="#9a9a9a" stroke-width="0.9" fill="none"></path>
<text x="84.5" y="50" font-size="11" font-weight="bold" font-family="Liberation Sans" fill="#707070">¶</text>
</g>
</svg>
<div class="a" style="left:740px;top:145px;width:1px;height:14px;background:#e2e2e2"></div>
<div class="a" style="left:731px;top:162px;width:1px;height:14px;background:#e2e2e2"></div>
<div class="a" style="left:715px;top:181px;width:1px;height:14px;background:#e2e2e2"></div>
<div class="a" style="left:738px;top:181px;width:1px;height:14px;background:#e2e2e2"></div>
<div class="t" style="left: 693px; font-size: 11px; color: rgb(85, 85, 85); top: 198.09px; transform-origin: 0px 0px; transform: scaleX(0.7591);">Paragraph</div>
<svg class="a" style="left:772px;top:201px" width="6" height="6" viewBox="0 0 6 6"><path d="M0.5 5.5 V0.5 H5.5" fill="none" stroke="#bbb" stroke-width="0.8"></path><path d="M2 2 L5.5 5.5" stroke="#999" stroke-width="0.8"></path></svg>
<div class="a" style="left:779.9px;top:145px;width:1px;height:62px;background:#e2e2e2"></div>
<!-- styles -->
<div class="a" style="left:784.4px;top:146.3px;width:174.4px;height:44.1px;border:1px solid #c6c6c6"></div>
<div class="a" style="left:788.3px;top:150.7px;width:47.2px;height:23.5px;background:#f6eff6"></div>
<div class="a" style="left:842px;top:150.7px;width:47.7px;height:23.5px;background:#f6eff6"></div>
<div class="a" style="left:895.7px;top:150.7px;width:47.8px;height:23.5px;background:#f6eff6"></div>
<div class="t" style="left: 789.5px; font-size: 11px; color: rgb(102, 102, 102); top: 157.09px; transform-origin: 0px 0px; transform: scaleX(0.8365);">AaBbCcDc</div>
<div class="t" style="left: 793px; font-size: 9.5px; color: rgb(154, 154, 154); top: 176.46px; transform-origin: 0px 0px; transform: scaleX(0.9385);">¶ Normal</div>
<div class="t" style="left: 843.5px; font-size: 11px; color: rgb(102, 102, 102); top: 157.09px; transform-origin: 0px 0px; transform: scaleX(0.8365);">AaBbCcDc</div>
<div class="t" style="left: 843px; font-size: 9.5px; color: rgb(160, 160, 160); top: 176.16px; transform-origin: 0px 0px; transform: scaleX(0.916);">No Spacing</div>
<div class="t" style="left: 897.5px; font-size: 15px; font-family: &quot;Liberation Serif&quot;, serif; color: rgb(138, 138, 138); top: 155.2px; transform-origin: 0px 0px; transform: scaleX(0.9778);">AaBbC</div>
<div class="t" style="left: 899.7px; font-size: 9.5px; color: rgb(168, 168, 168); top: 176.16px; transform-origin: 0px 0px; transform: scaleX(0.9189);">Heading 1</div>
<div class="a" style="left:947.5px;top:147px;width:1px;height:43px;background:#dcdcdc"></div>
<div class="a" style="left:948px;top:162px;width:10px;height:1px;background:#dcdcdc"></div>
<div class="a" style="left:948px;top:176px;width:10px;height:1px;background:#dcdcdc"></div>
<svg class="a" style="left:948px;top:147px" width="11" height="43" viewBox="0 0 11 43">
<path d="M3.5 8 L5.5 6 L7.5 8" fill="none" stroke="#aaa" stroke-width="0.8"></path>
<path d="M3.5 21 L5.5 23 L7.5 21" fill="none" stroke="#aaa" stroke-width="0.8"></path>
<path d="M3.5 33 H7.5 M3.5 35 L5.5 37 L7.5 35" fill="none" stroke="#aaa" stroke-width="0.8"></path>
</svg>
<div class="t" style="left: 855.5px; font-size: 11px; color: rgb(85, 85, 85); top: 198.09px; transform-origin: 0px 0px; transform: scaleX(0.7107);">Styles</div>
<svg class="a" style="left:956px;top:201px" width="6" height="6" viewBox="0 0 6 6"><path d="M0.5 5.5 V0.5 H5.5" fill="none" stroke="#bbb" stroke-width="0.8"></path><path d="M2 2 L5.5 5.5" stroke="#999" stroke-width="0.8"></path></svg>
<div class="a" style="left:964.4px;top:145px;width:1px;height:62px;background:#e2e2e2"></div>
<!-- editing -->
<div class="a" style="left:969px;top:145px;width:22.7px;height:21px;border:1px solid #d0d0d0"></div>
<svg class="a" style="left:974px;top:149px" width="13" height="12" viewBox="0 0 13 12">
<path d="M1 11 L1.5 5 L3 2 H5 V11z M12 11 L11.5 5 L10 2 H8 V11z" fill="#555"></path>
<rect x="5" y="4" width="3" height="3" fill="#555"></rect>
<circle cx="3" cy="9" r="1.3" fill="#fff"></circle><circle cx="10" cy="9" r="1.3" fill="#fff"></circle>
</svg>
<div class="t" style="left: 967px; font-size: 11px; color: rgb(68, 68, 68); top: 170.69px; transform-origin: 0px 0px; transform: scaleX(0.8115);">Editing</div>
<svg class="a" style="left:978px;top:187px" width="5" height="3" viewBox="0 0 5 3"><path d="M0 0 H5 L2.5 3z" fill="#555"></path></svg>
<div class="a" style="left:997.3px;top:145px;width:1px;height:62px;background:#e2e2e2"></div>
<svg class="a" style="left:1007px;top:202px" width="8" height="5" viewBox="0 0 8 5"><path d="M1 4.5 L4 1.5 L7 4.5" fill="none" stroke="#444" stroke-width="1.3"></path></svg>
<!-- document -->
<div class="a" style="left:1008px;top:211px;width:13px;height:310px;background:#f3f3f3"></div>
<div class="a" style="left:456px;top:521px;width:565px;height:13px;background:#efefef"></div>
<!-- boxes top -->
<div class="a" style="left:600px;top:260.5px;width:123px;height:88px;border:1px solid #888;border-width:1.5px"></div>
<div class="a" style="left:600px;top:275px;width:123px;height:1px;background:#888"></div>
<div class="a" style="left:740.5px;top:260.5px;width:261px;height:88px;border:1.5px solid #8a8a8a"></div>
<div class="a" style="left:740.5px;top:275px;width:261px;height:1.3px;background:#8a8a8a"></div>
<div class="t" style="left: 809.2px; font-size: 11px; font-weight: bold; color: rgb(90, 90, 90); top: 260.69px; transform-origin: 0px 0px; transform: scaleX(0.8881);">Administrative Information</div>
<div class="t ad" style="left: 746.8px; top: 278.28px; transform-origin: 0px 0px; transform: scaleX(0.998);">Imaging Facility:</div>
<div class="t ad" style="left: 854.4px; top: 278.28px; transform-origin: 0px 0px; transform: scaleX(0.8397);">[&lt; &nbsp;FACILITY15 &nbsp;&gt;]</div>
<div class="t ad" style="left: 758.5px; top: 293.18px; transform-origin: 0px 0px; transform: scaleX(0.9822);">Address:</div>
<div class="t ad" style="left: 854.4px; top: 293.18px; transform-origin: 0px 0px; transform: scaleX(0.9819);">[&lt; &nbsp; &gt;]</div>
<div class="t ad" style="left: 758.5px; top: 307.38px; transform-origin: 0px 0px; transform: scaleX(1.004);">Phone Number:</div>
<div class="t ad" style="left: 854.4px; top: 307.38px; transform-origin: 0px 0px; transform: scaleX(0.9819);">[&lt; &nbsp; &gt;]</div>
<div class="t ad" style="left: 746.8px; top: 322.28px; transform-origin: 0px 0px; transform: scaleX(1.0141);">Referring Provider:</div>
<div class="t ad" style="left: 854.4px; top: 322.28px; transform-origin: 0px 0px; transform: scaleX(0.8368);">[&lt; &nbsp;REF-PHY-10 &nbsp;&gt;]</div>
<div class="t ad" style="left: 746.8px; top: 336.88px; transform-origin: 0px 0px; transform: scaleX(1.0024);">Referring Facility:</div>
<div class="t ad" style="left: 854.4px; top: 336.88px; transform-origin: 0px 0px; transform: scaleX(0.8337);">[&lt; &nbsp;REF-FACILITY11 &nbsp;&gt;]</div>
<div class="t" style="left: 635.8px; font-size: 11px; font-weight: bold; color: rgb(106, 106, 106); top: 356.29px; transform-origin: 0px 0px; transform: scaleX(0.9733);">[&lt;PRELIMINARY&gt;]</div>
<div class="t" style="left: 732.3px; font-size: 11px; font-weight: bold; color: rgb(106, 106, 106); top: 356.29px; transform-origin: 0px 0px; transform: scaleX(0.882);">RADIOLOGY REPORT</div>
<!-- clinical history -->
<div class="a" style="left:467px;top:373.7px;width:534px;height:65px;border:1px solid #2a2a2a"></div>
<div class="a" style="left:467px;top:389px;width:534px;height:1px;background:#2a2a2a"></div>
<div class="t" style="left: 474px; font-size: 10.5px; font-weight: bold; color: rgb(17, 17, 17); top: 375.91px; transform-origin: 0px 0px; transform: scaleX(0.9212);">CLINICAL HISTORY</div>
<div class="hl" style="left:576px;top:390px;width:23px;height:11px"></div>
<div class="hl" style="left:576px;top:402px;width:26px;height:11px"></div>
<div class="t dc" style="left: 474px; top: 390.36px; transform-origin: 0px 0px; transform: scaleX(0.9773);">Medical history:</div>
<div class="t dc" style="left: 569.7px; top: 390.36px; transform-origin: 0px 0px; transform: scaleX(1.5148);">[</div>
<div class="t dc" style="left: 577.5px; top: 390.36px; transform-origin: 0px 0px; transform: scaleX(0.9243);">None</div>
<div class="t dc" style="left: 600.5px; top: 390.36px; transform-origin: 0px 0px; transform: scaleX(1.5148);">]</div>
<div class="t dc" style="left: 474px; top: 402.36px; transform-origin: 0px 0px; transform: scaleX(0.926);">Risk factors:</div>
<div class="t dc" style="left: 569.7px; top: 402.36px; transform-origin: 0px 0px; transform: scaleX(1.5148);">[</div>
<div class="t dc" style="left: 577.5px; top: 402.36px; transform-origin: 0px 0px; transform: scaleX(0.9846);">Minor</div>
<div class="t dc" style="left: 602.5px; top: 402.36px; transform-origin: 0px 0px; transform: scaleX(1.5148);">]</div>
<div class="t dc" style="left: 474px; top: 414.36px; transform-origin: 0px 0px; transform: scaleX(0.9468);">Allergies:</div>
<div class="t dc" style="left: 569.7px; top: 414.36px; transform-origin: 0px 0px; transform: scaleX(0.8776);">[&lt; &nbsp;NO KNOWN ALLERGIES &gt;]</div>
<div class="t dc" style="left: 474px; top: 425.96px; transform-origin: 0px 0px; transform: scaleX(0.9335);">Reason for exam:</div>
<div class="t dc" style="left: 569.7px; top: 425.96px; transform-origin: 0px 0px; transform: scaleX(0.9178);">[&lt; &nbsp; &gt;]</div>
<!-- imaging -->
<div class="a" style="left:467px;top:446px;width:534px;height:90px;border:1px solid #2a2a2a;border-bottom:none"></div>
<div class="a" style="left:467px;top:461.7px;width:534px;height:1px;background:#2a2a2a"></div>
<div class="t" style="left: 474px; font-size: 10.5px; font-weight: bold; color: rgb(17, 17, 17); top: 447.81px; transform-origin: 0px 0px; transform: scaleX(0.9674);">IMAGING TECHNIQUES</div>
<div class="hl" style="left:534.3px;top:462.5px;width:420.7px;height:12px"></div>
<div class="hl" style="left:474px;top:474.5px;width:180.8px;height:12px"></div>
<div class="hl" style="left:668.7px;top:474.5px;width:17.3px;height:12px"></div>
<div class="hl" style="left:821.8px;top:474.5px;width:110.2px;height:12px"></div>
<div class="hl" style="left:609.5px;top:499px;width:45.3px;height:12px"></div>
<div class="hl" style="left:668px;top:499px;width:17.4px;height:12px"></div>
<div class="hl" style="left:914.7px;top:499px;width:16.6px;height:12px"></div>
<div class="t dc" style="left: 474px; top: 463.16px; transform-origin: 0px 0px; transform: scaleX(0.9802);">Unenhanced [</div>
<div class="t dc" style="left: 537.5px; top: 463.16px; transform-origin: 0px 0px; transform: scaleX(0.948);">Both L4-5 disk Manages this ag &nbsp;Both L4-5 disk this with diet again so we are notFrom Synthes infidelity</div>
<div class="t dc" style="left: 474px; top: 475.06px; transform-origin: 0px 0px; transform: scaleX(0.968);">medication That is elevated itself is All Bold ] ] [</div>
<div class="t dc" style="left: 670.3px; top: 475.06px; transform-origin: 0px 0px; transform: scaleX(1.1327);">#</div>
<div class="t dc" style="left: 688.8px; top: 475.06px; transform-origin: 0px 0px; transform: scaleX(0.9886);">mm] transaxial imaging from a [</div>
<div class="t dc" style="left: 824.5px; top: 475.06px; transform-origin: 0px 0px; transform: scaleX(0.9676);">this is a test next tolerable] ] of the</div>
<div class="t dc" style="left: 474px; top: 486.76px; transform-origin: 0px 0px; transform: scaleX(1.0159);">adrenal glands.</div>
<div class="t dc" style="left: 474px; top: 499.56px; transform-origin: 0px 0px; transform: scaleX(0.9725);">Intravenous contrast enhanced [</div>
<div class="t dc" style="left: 611.5px; top: 499.56px; transform-origin: 0px 0px; transform: scaleX(0.9035);">scan mode</div>
<div class="t dc" style="left: 656px; top: 499.56px; transform-origin: 0px 0px; transform: scaleX(1.2623);">] [</div>
<div class="t dc" style="left: 670.3px; top: 499.56px; transform-origin: 0px 0px; transform: scaleX(1.1327);">#</div>
<div class="t dc" style="left: 688.5px; top: 499.56px; transform-origin: 0px 0px; transform: scaleX(0.9686);">mm] transaxial imaging through the adrenal glands at [</div>
<div class="t dc" style="left: 916px; top: 499.56px; transform-origin: 0px 0px; transform: scaleX(0.8697);">30</div>
<div class="t dc" style="left: 932.2px; top: 499.56px; transform-origin: 0px 0px; transform: scaleX(0.9343);">seconds].</div>
<div class="t dc" style="left: 474px; top: 512.16px; transform-origin: 0px 0px; transform: scaleX(0.9663);">Imaging was continued through the [</div>
<div class="hl" style="left:628px;top:512px;width:11.5px;height:10px;background:#fff;border:1px solid #333"></div>
<svg class="a" style="left:628px;top:512px" width="11" height="10" viewBox="0 0 11 11"><path d="M1 1 L10 10 M10 1 L1 10" stroke="#333" stroke-width="1"></path></svg>
<div class="t dc" style="left: 642px; top: 512.16px; transform-origin: 0px 0px; transform: scaleX(0.9667);">] abdomen [</div>
<div class="hl" style="left:696.3px;top:512px;width:11.3px;height:10px;background:#ccc;border:1px solid #555"></div>
<div class="t dc" style="left: 710.4px; top: 512.16px; transform-origin: 0px 0px; transform: scaleX(0.9427);">] and pelvis.</div>
<div class="a" style="left:456px;top:521px;width:552px;height:13px;background:#efefef"></div>
<div class="a" style="left:1008px;top:521px;width:13px;height:13px;background:#efefef"></div>
<!-- status bar -->
<div class="a" style="left:456px;top:534px;width:565px;height:16px;background:#2b579a"></div>
<div class="t" style="left: 461px; font-size: 9px; color: rgb(230, 236, 245); top: 538.18px; transform-origin: 0px 0px; transform: scaleX(0.8517);">PAGE 1 OF 2</div>
<div class="t" style="left: 521.8px; font-size: 9px; color: rgb(230, 236, 245); top: 538.18px; transform-origin: 0px 0px; transform: scaleX(0.8963);">1 OF 397 WORDS</div>
<svg class="a" style="left:602px;top:536px" width="40" height="13" viewBox="0 0 40 13">
<path d="M0.8 1.5 H5 L6 2.5 L7 1.5 H11 V11.5 H7 L6 12.5 L5 11.5 H0.8z" fill="none" stroke="#dfe6f0" stroke-width="1"></path>
<path d="M6 2.5 V12" stroke="#dfe6f0" stroke-width="0.8"></path>
<path d="M9 6 L12 9 M12 6 L9 9" stroke="#fff" stroke-width="1"></path>
<rect x="27" y="3" width="11" height="9.5" fill="#dfe6f0"></rect><rect x="27" y="3" width="5" height="4" fill="#7a9cd0"></rect>
<rect x="30" y="8" width="1.2" height="4" fill="#2b579a"></rect><rect x="33" y="8" width="1.2" height="4" fill="#2b579a"></rect><rect x="36" y="8" width="1.2" height="4" fill="#2b579a"></rect>
</svg>
<div class="a" style="left:831.5px;top:534px;width:28.3px;height:16px;background:#1f4a88"></div>
<svg class="a" style="left:810px;top:536px" width="210" height="13" viewBox="0 0 210 13">
<path d="M1.5 1.5 H5.5 L6.5 2.5 L7.5 1.5 H11.5 V11 H7.5 L6.5 12 L5.5 11 H1.5z" fill="none" stroke="#dfe6f0" stroke-width="1"></path>
<path d="M6.5 2.5 V11.5" stroke="#dfe6f0" stroke-width="0.8"></path>
<rect x="30.5" y="1.5" width="11" height="10" fill="#a9bde0" stroke="#e8eef8" stroke-width="1"></rect>
<rect x="58.5" y="1.5" width="10" height="10" fill="none" stroke="#dfe6f0" stroke-width="1"></rect>
<circle cx="67" cy="9.5" r="2.8" fill="#2b579a" stroke="#dfe6f0" stroke-width="0.9"></circle>
<rect x="80.5" y="6" width="5" height="1.3" fill="#fff"></rect>
<rect x="89.5" y="6.3" width="75" height="1" fill="#c8d4ea"></rect>
<rect x="125" y="2" width="2.5" height="9" fill="#fff"></rect>
<path d="M167 6.6 H173 M170 3.6 V9.6" stroke="#fff" stroke-width="1.3"></path>
</svg>
<div class="t" style="left: 994.6px; font-size: 9px; color: rgb(230, 236, 245); top: 538.18px; transform-origin: 0px 0px; transform: scaleX(0.864);">100%</div>
<!-- dialog -->
<div class="a" style="left:314px;top:207px;width:396px;height:158px;background:#333;background-clip:padding-box;border:1px solid rgba(255,255,255,0.45)"></div>
<div class="a" style="left:315px;top:208px;width:394px;height:18px;background:#3b5a8c"></div>
<div class="t" style="left: 321.7px; font-size: 12.5px; color: rgb(238, 242, 248); top: 211.22px; transform-origin: 0px 0px; transform: scaleX(0.9034);">Sign Report Confirmation</div>
<div class="t" style="left: 680.5px; font-size: 9px; font-weight: bold; color: rgb(224, 230, 238); top: 212.88px;">?</div>
<svg class="a" style="left:696px;top:213px" width="8" height="8" viewBox="0 0 8 8"><path d="M1 1 L7 7 M7 1 L1 7" stroke="#e8ecf2" stroke-width="1.2"></path></svg>
<div class="t" style="left: 391.2px; font-size: 12px; color: rgb(230, 230, 230); top: 248.14px; transform-origin: 0px 0px; transform: scaleX(0.9362);">There are multiple reports to be signed.</div>
<div class="t" style="left: 399.8px; font-size: 12px; color: rgb(230, 230, 230); top: 278.14px; transform-origin: 0px 0px; transform: scaleX(0.8897);">Current</div>
<div class="t" style="left: 439px; font-size: 12px; color: rgb(230, 230, 230); top: 278.14px; transform-origin: 0px 0px; transform: scaleX(0.9403);">- Sign only the current report</div>
<div class="t" style="left: 399.8px; font-size: 12px; color: rgb(230, 230, 230); top: 292.54px; transform-origin: 0px 0px; transform: scaleX(1.0117);">All</div>
<div class="t" style="left: 441.2px; font-size: 12px; color: rgb(230, 230, 230); top: 292.54px; transform-origin: 0px 0px; transform: scaleX(0.9293);">- Sign all reports</div>
<!-- buttons -->
<div class="a" style="left:367px;top:332px;width:83px;height:22px;background:#1a0a66;border:1px solid #4a3d8c"></div>
<div class="a" style="left:369px;top:334px;width:79px;height:18px;border:1px dotted #7068b0"></div>
<div class="t" style="left: 390px; font-size: 12px; color: rgb(244, 244, 255); top: 336.84px; transform-origin: 0px 0px; transform: scaleX(0.8897);">Current</div>
<div class="a" style="left:470.5px;top:331.8px;width:83px;height:22px;background:#2a7bc0;border:1px solid #5a5a6a;box-shadow:inset 0 0 0 1px #0f2f78"></div>
<div class="t" style="left: 504.4px; font-size: 12px; color: rgb(255, 255, 255); top: 336.84px; transform-origin: 0px 0px; transform: scaleX(0.9892);">All</div>
<div class="a" style="left:574px;top:331.8px;width:83px;height:22px;background:#2a7bc0;border:1px solid #5a5a6a;box-shadow:inset 0 0 0 1px #0f2f78"></div>
<div class="t" style="left: 598.5px; font-size: 12px; color: rgb(255, 255, 255); top: 336.84px; transform-origin: 0px 0px; transform: scaleX(0.8833);">Cancel</div>

</body></html>
